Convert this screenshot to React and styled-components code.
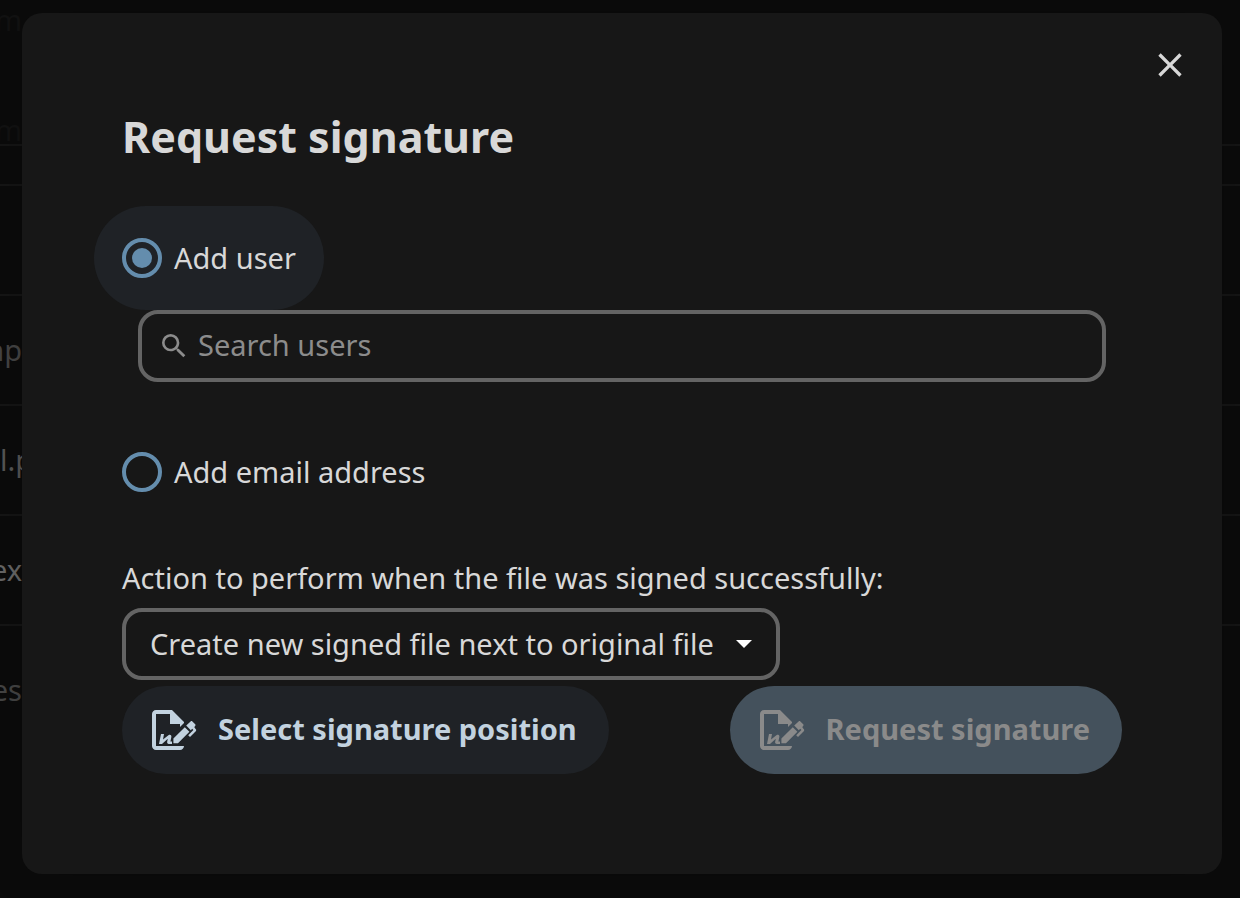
import React, { useState } from "react";
import styled, { createGlobalStyle } from "styled-components";

const GlobalStyle = createGlobalStyle`
  *, *::before, *::after { box-sizing: border-box; }
  body {
    margin: 0;
    background: #0b0b0b;
    color: #d8d8d8;
    font-family: "Noto Sans", "Open Sans", sans-serif;
    font-size: 29px;
    line-height: 40px;
  }
  button, input, select { font: inherit; color: inherit; }
`;

const Page = styled.div`
  display: grid;
  min-height: 100vh;
  overflow: hidden;
`;

const FileList = styled.div`
  grid-area: 1 / 1;
  display: flex;
  flex-direction: column;
  height: 0;
`;

const FileRow = styled.div`
  flex: none;
  display: flex;
  align-items: flex-end;
  height: ${(p) => p.$height}px;
  padding-bottom: ${(p) => p.$bottom ?? 34}px;
  border-bottom: 2px solid ${(p) => (p.$last ? "transparent" : "#151515")};
  color: ${(p) => p.$color || "#444444"};
`;

const FileName = styled.span`
  display: flex;
  justify-content: ${(p) => (p.$start ? "flex-start" : "flex-end")};
  width: 22px;
  white-space: nowrap;
`;

const FileHeader = styled.div`
  align-self: flex-start;
  display: flex;
  flex-direction: column;
  gap: 70px;
`;

const Dialog = styled.section`
  grid-area: 1 / 1;
  position: relative;
  align-self: start;
  margin: 13px 18px 24px 22px;
  padding: 94px 100px 100px;
  border-radius: 20px;
  background: #171717;
  box-shadow: 0 0 40px rgba(0, 0, 0, 0.2);
`;

const CloseButton = styled.button`
  position: absolute;
  top: 8px;
  right: 8px;
  display: grid;
  place-items: center;
  width: 88px;
  height: 88px;
  padding: 0;
  border: 0;
  border-radius: 44px;
  background: none;
`;

const Icon = styled.svg`
  display: block;
  flex: none;
  width: ${(p) => p.$size}px;
  height: ${(p) => p.$size}px;
  fill: currentColor;
`;

const Title = styled.h2`
  margin: 0 0 39px;
  font-size: 43px;
  line-height: 60px;
  font-weight: 700;
`;

const RadioOption = styled.label`
  display: flex;
  align-items: center;
  gap: 12px;
  width: fit-content;
  height: 104px;
  margin-left: -28px;
  padding: 0 28px;
  border-radius: 52px;
  background: ${(p) => (p.$checked ? "#1f2226" : "transparent")};
`;

const Radio = styled.input`
  appearance: none;
  display: grid;
  place-items: center;
  width: 40px;
  height: 40px;
  margin: 0;
  border: 4px solid #648dad;
  border-radius: 50%;

  &:checked::before {
    content: "";
    width: 20px;
    height: 20px;
    border-radius: 50%;
    background: #648dad;
  }
`;

const SearchBox = styled.div`
  display: flex;
  align-items: center;
  gap: 8px;
  height: 72px;
  margin: 0 16px 38px;
  padding: 0 16px;
  border: 4px solid #646464;
  border-radius: 20px;
  color: #8c8c8c;
`;

const SearchInput = styled.input`
  flex: 1;
  min-width: 0;
  height: 40px;
  padding: 0 0 2px;
  border: 0;
  outline: 0;
  background: none;

  &::placeholder { color: #8c8c8c; opacity: 1; }
`;

const ActionLabel = styled.label`
  display: block;
  width: fit-content;
  margin-top: 34px;
  padding-bottom: 10px;
`;

const SelectBox = styled.div`
  display: grid;
  align-items: center;
  width: fit-content;
  margin-bottom: 6px;
`;

const Select = styled.select`
  grid-area: 1 / 1;
  appearance: none;
  height: 72px;
  padding: 0 62px 0 24px;
  border: 4px solid #646464;
  border-radius: 20px;
  background: #171717;
`;

const Caret = styled.svg`
  grid-area: 1 / 1;
  justify-self: end;
  width: 16px;
  height: 8px;
  margin-right: 28px;
  fill: #ffffff;
  pointer-events: none;
`;

const Actions = styled.div`
  display: flex;
  justify-content: space-between;
`;

const ActionButton = styled.button`
  display: flex;
  align-items: center;
  gap: 20px;
  height: 88px;
  padding: 0 32px 2px 28px;
  border: 0;
  border-radius: 44px;
  font-weight: 700;
  background: ${(p) => (p.$primary ? "#44515c" : "#1f2226")};
  color: ${(p) => (p.$primary ? "#8a8a8a" : "#c2d2df")};

  svg { margin-top: 2px; }
`;

const SIGN_PATH =
  "M19.7 12.9L14 18.6H11.7V16.3L17.4 10.6L19.7 12.9M23.1 12.1C23.1 12.4 22.8 12.7 22.5 13L20 15.5L19.1 14.6L21.7 12L21.1 11.4L20.4 12.1L18.1 9.8L20.3 7.7C20.5 7.5 20.9 7.5 21.2 7.7L22.6 9.1C22.8 9.3 22.8 9.7 22.6 10C22.4 10.2 22.2 10.4 22.2 10.6C22.2 10.8 22.4 11 22.6 11.2C22.9 11.5 23.2 11.8 23.1 12.1M3 20V4H10V9H15V10.5L17 8.5V8L11 2H3C1.9 2 1 2.9 1 4V20C1 21.1 1.9 22 3 22H15C16.1 22 17 21.1 17 20H3M7 14H5.5L4.5 19H6L8.9 16.4L8.6 17.8C8.4 18.6 8.8 19 9.4 19H11V17.7H10.2L10.7 15.4C10.8 14.4 9.9 14.1 9.2 14.6L6.5 16.7Z";
const SEARCH_PATH =
  "M9.5,3A6.5,6.5 0 0,1 16,9.5C16,11.11 15.41,12.59 14.44,13.73L14.71,14H15.5L20.5,19L19,20.5L14,15.5V14.71L13.73,14.44C12.59,15.41 11.11,16 9.5,16A6.5,6.5 0 0,1 3,9.5A6.5,6.5 0 0,1 9.5,3M9.5,5C7,5 5,7 5,9.5C5,12 7,14 9.5,14C12,14 14,12 14,9.5C14,7 12,5 9.5,5Z";
const CLOSE_PATH =
  "M19,6.41L17.59,5L12,10.59L6.41,5L5,6.41L10.59,12L5,17.59L6.41,19L12,13.41L17.59,19L19,17.59L13.41,12L19,6.41Z";

function Glyph({ path, size }) {
  return (
    <Icon viewBox="0 0 24 24" $size={size} aria-hidden="true">
      <path d={path} />
    </Icon>
  );
}

export default function App() {
  const [kind, setKind] = useState("user");
  return (
    <>
      <GlobalStyle />
      <Page>
        <FileList aria-hidden="true">
          <FileRow $height={146} $color="#121212" $bottom={0}>
            <FileHeader>
              <FileName>m</FileName>
              <FileName>m</FileName>
            </FileHeader>
          </FileRow>
          <FileRow $height={40} />
          <FileRow $height={110} />
          <FileRow $height={110}><FileName>np</FileName></FileRow>
          <FileRow $height={110} $color="#555555"><FileName $start>l.pdf</FileName></FileRow>
          <FileRow $height={110} $color="#666666"><FileName>ex</FileName></FileRow>
          <FileRow $height={110} $bottom={24} $last><FileName>es</FileName></FileRow>
        </FileList>
        <Dialog role="dialog" aria-modal="true" aria-labelledby="dialog-title">
          <CloseButton type="button" aria-label="Close">
            <Glyph path={CLOSE_PATH} size={40} />
          </CloseButton>
          <Title id="dialog-title">Request signature</Title>
          <RadioOption $checked={kind === "user"}>
            <Radio type="radio" name="recipient" checked={kind === "user"} onChange={() => setKind("user")} />
            Add user
          </RadioOption>
          <SearchBox>
            <Glyph path={SEARCH_PATH} size={32} />
            <SearchInput type="text" aria-label="Search users" placeholder="Search users" />
          </SearchBox>
          <RadioOption $checked={kind === "email"}>
            <Radio type="radio" name="recipient" checked={kind === "email"} onChange={() => setKind("email")} />
            Add email address
          </RadioOption>
          <ActionLabel htmlFor="signed-action">
            Action to perform when the file was signed successfully:
          </ActionLabel>
          <SelectBox>
            <Select id="signed-action">
              <option>Create new signed file next to original file</option>
            </Select>
            <Caret viewBox="0 0 16 8" aria-hidden="true"><path d="M0 0H16L8 8Z" /></Caret>
          </SelectBox>
          <Actions>
            <ActionButton type="button">
              <Glyph path={SIGN_PATH} size={48} />
              Select signature position
            </ActionButton>
            <ActionButton type="button" $primary disabled>
              <Glyph path={SIGN_PATH} size={48} />
              Request signature
            </ActionButton>
          </Actions>
        </Dialog>
      </Page>
    </>
  );
}
